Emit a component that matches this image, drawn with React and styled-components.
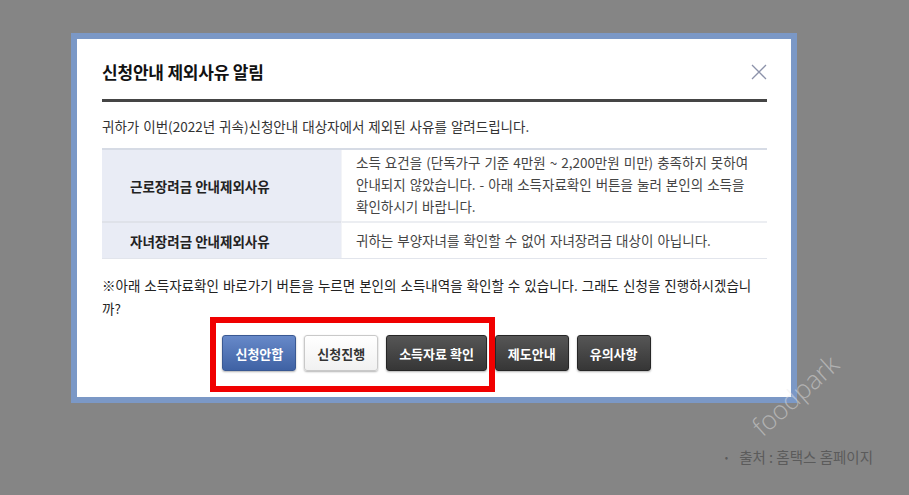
import React from "react";
import styled, { createGlobalStyle } from "styled-components";

const Global = createGlobalStyle`
  html, body { margin: 0; padding: 0; }
  body {
    background: #858585;
    font-family: "Noto Sans CJK KR", "Noto Sans", sans-serif;
    width: 909px;
    height: 495px;
    overflow: hidden;
  }
`;

const Page = styled.div`
  position: relative;
  width: 909px;
  height: 495px;
  box-sizing: border-box;
  padding: 33px 0 0 71px;
  display: flex;
  flex-direction: column;
`;

const Dialog = styled.div`
  position: relative;
  width: 726px;
  box-sizing: border-box;
  border: 6px solid #7b98c6;
  background: #fff;
  padding: 21px 24px 26px 25px;
`;

const Header = styled.div`
  display: flex;
  align-items: center;
  justify-content: space-between;
  height: 24px;
`;

const Title = styled.h1`
  margin: 0;
  font-size: 17px;
  line-height: 24px;
  font-weight: 700;
  color: #111;
  letter-spacing: -0.2px;
`;

const Close = styled.button`
  border: 0;
  background: none;
  padding: 0;
  width: 16px;
  height: 16px;
  display: flex;
  cursor: pointer;
`;

const Rule = styled.div`
  height: 3px;
  background: #454545;
  margin-top: 15px;
`;

const Body = styled.div`
  font-size: 13.5px;
  word-spacing: 1px;
`;

const Intro = styled.p`
  margin: 14px 0 0;
  line-height: 20px;
  color: #333;
`;

const Table = styled.div`
  margin-top: 12px;
  border-top: 2px solid #d6dbe5;
  border-bottom: 1px solid #e2e5ec;
  display: grid;
  grid-template-columns: 239px 1fr;
`;

const Label = styled.div`
  background: #e9ecf5;
  display: flex;
  align-items: center;
  padding: 0 0 0 28px;
  font-weight: 700;
  color: #222;
  word-spacing: 0;
  border-top: ${(p) => (p.$first ? "0" : "2px solid #dfe2e9")};
`;

const Cell = styled.div`
  padding: ${(p) => (p.$first ? "1px 8px 4px 14px" : "6px 8px 7px 14px")};
  line-height: 22px;
  color: #444;
  border-top: ${(p) => (p.$first ? "0" : "2px solid #eceef2")};
  border-left: 1px solid #f3f4f7;
`;

const Note = styled.p`
  margin: 15px 4px 0 0;
  line-height: 23px;
  color: #222;
`;

const Buttons = styled.div`
  display: flex;
  justify-content: center;
  gap: 8px;
  margin-top: 15px;
  padding-left: 4px;
`;

const variants = {
  blue: `
    background: linear-gradient(#6789c9, #3f62a4);
    border: 1px solid #3a5993;
    color: #fff;
  `,
  white: `
    background: linear-gradient(#ffffff, #f1f1f1);
    border: 1px solid #c9c9c9;
    color: #333;
  `,
  dark: `
    background: linear-gradient(#565656, #363636);
    border: 1px solid #262626;
    color: #fff;
  `,
};

const Btn = styled.button`
  height: 36px;
  padding: 0 12px;
  border-radius: 3px;
  font-family: inherit;
  font-size: 13px;
  font-weight: 700;
  word-spacing: 0;
  box-shadow: 0 1px 2px rgba(0, 0, 0, 0.3);
  cursor: pointer;
  ${(p) => variants[p.$variant]}
`;

const Highlight = styled.div`
  position: absolute;
  left: 133px;
  top: 278px;
  width: 285px;
  height: 75px;
  box-sizing: border-box;
  border: 6px solid #f00000;
  pointer-events: none;
`;

const Watermark = styled.div`
  position: absolute;
  left: 738px;
  top: 380px;
  width: 114px;
  text-align: center;
  font-family: "Open Sans", "Liberation Sans", sans-serif;
  font-weight: 300;
  font-size: 26px;
  line-height: 30px;
  color: rgba(235, 235, 235, 0.45);
  transform: rotate(-42deg);
  transform-origin: center;
  pointer-events: none;
`;

const Source = styled.div`
  align-self: flex-end;
  margin: 44px 36px 0 0;
  font-size: 14.5px;
  line-height: 20px;
  color: #5b5b5b;
  display: flex;
  align-items: center;
  gap: 11px;
`;

const Dot = styled.span`
  font-size: 10px;
`;

export default function App() {
  return (
    <>
      <Global />
      <Page>
        <Dialog>
          <Header>
            <Title>신청안내 제외사유 알림</Title>
            <Close aria-label="닫기">
              <svg width="16" height="16" viewBox="0 0 16 16">
                <path d="M1 1 L15 15 M15 1 L1 15" stroke="#8c92aa" strokeWidth="1.3" fill="none" />
              </svg>
            </Close>
          </Header>
          <Rule />
          <Body>
            <Intro>귀하가 이번(2022년 귀속)신청안내 대상자에서 제외된 사유를 알려드립니다.</Intro>
            <Table>
              <Label $first>근로장려금 안내제외사유</Label>
              <Cell $first>
                소득 요건을 (단독가구 기준 4만원 ~ 2,200만원 미만) 충족하지 못하여 안내되지 않았습니다. - 아래 소득자료확인 버튼을 눌러 본인의 소득을 확인하시기 바랍니다.
              </Cell>
              <Label>자녀장려금 안내제외사유</Label>
              <Cell>귀하는 부양자녀를 확인할 수 없어 자녀장려금 대상이 아닙니다.</Cell>
            </Table>
            <Note>
              ※아래 소득자료확인 바로가기 버튼을 누르면 본인의 소득내역을 확인할 수 있습니다. 그래도 신청을 진행하시겠습니까?
            </Note>
            <Buttons>
              <Btn $variant="blue">신청안합</Btn>
              <Btn $variant="white">신청진행</Btn>
              <Btn $variant="dark">소득자료 확인</Btn>
              <Btn $variant="dark">제도안내</Btn>
              <Btn $variant="dark">유의사항</Btn>
            </Buttons>
          </Body>
          <Highlight />
        </Dialog>
        <Source>
          <Dot>•</Dot>
          <span>출처 : 홈택스 홈페이지</span>
        </Source>
        <Watermark>foodpark</Watermark>
      </Page>
    </>
  );
}
